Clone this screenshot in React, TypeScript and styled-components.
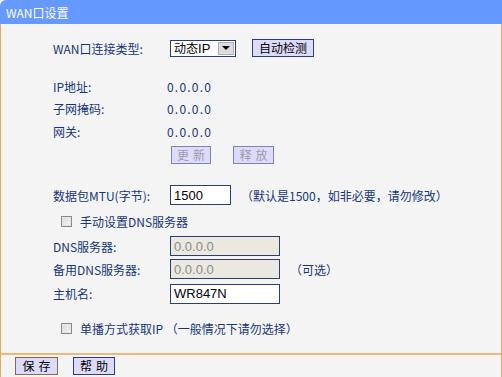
import React from 'react'
import styled, { createGlobalStyle } from 'styled-components'

const GlobalStyle = createGlobalStyle`
  html, body {
    margin: 0;
    padding: 0;
    background: #f4f4f4;
  }
  body {
    font-family: "Noto Sans CJK SC", "DejaVu Sans", sans-serif;
    font-size: 12px;
    color: #15367a;
  }
`

const Frame = styled.div`
  width: 502px;
  height: 377px;
  display: flex;
  flex-direction: column;
  background: #f4f4f4;
  overflow: hidden;
`

const Header = styled.div`
  height: 24px;
  flex: none;
  background: #6699ff;
  border-top-left-radius: 6px;
  display: flex;
  align-items: center;
  padding-left: 6px;
  color: #ffffff;
  font-size: 12px;
`

const Body = styled.div`
  flex: 1;
  display: flex;
  flex-direction: column;
  border-left: 1px solid #e9a862;
  border-right: 1px solid #e9a862;
  padding-top: 12px;
`

const Form = styled.div`
  display: flex;
  flex-direction: column;
  padding-left: 52px;
  height: 317px;
`

const Row = styled.div<{ $h: number; $indent?: number }>`
  height: ${(p) => p.$h}px;
  display: flex;
  align-items: center;
  padding-left: ${(p) => p.$indent || 0}px;
`

const Spacer = styled.div<{ $h: number }>`
  height: ${(p) => p.$h}px;
  flex: none;
`

const Label = styled.div`
  width: 117px;
  flex: none;
  white-space: nowrap;
`

const Value = styled.div`
  letter-spacing: 1.2px;
  margin-left: -3px;
`

const Note = styled.span<{ $ml: number }>`
  margin-left: ${(p) => p.$ml}px;
  white-space: nowrap;
`

const Select = styled.div`
  width: 66px;
  height: 17px;
  box-sizing: border-box;
  border: 1px solid #2a3f70;
  background: #ffffff;
  display: flex;
  align-items: center;
  justify-content: space-between;
  color: #000;
  padding-left: 3px;
`

const SelectText = styled.span`
  font-size: 12px;
  line-height: 1;
  & b {
    font-family: "Liberation Sans", sans-serif;
    font-weight: normal;
    font-size: 13px;
  }
`

const Arrow = styled.span`
  width: 16px;
  height: 13px;
  margin-right: 1px;
  background: #dcdcdc;
  border: 1px solid #b0b0b0;
  box-sizing: border-box;
  display: flex;
  align-items: center;
  justify-content: center;
  &::after {
    content: '';
    border-left: 4px solid transparent;
    border-right: 4px solid transparent;
    border-top: 4px solid #000;
  }
`

const Button = styled.button<{ $disabled?: boolean; $w: number; $ml?: number; $brown?: boolean }>`
  width: ${(p) => p.$w}px;
  height: 18px;
  margin-left: ${(p) => p.$ml || 0}px;
  padding: 0;
  box-sizing: border-box;
  font-family: "Noto Sans CJK SC", sans-serif;
  font-size: 12px;
  letter-spacing: ${(p) => (p.$w < 50 ? '4px' : '0')};
  text-indent: ${(p) => (p.$w < 50 ? '4px' : '0')};
  line-height: 1;
  background: #dcdcfa;
  color: ${(p) => (p.$disabled ? '#9a9ab0' : '#000000')};
  border: 1px solid ${(p) => (p.$brown ? '#8a6a40' : p.$disabled ? '#7a86b0' : '#2c3d80')};
  border-radius: 0;
`

const Input = styled.div<{ $w: number; $disabled?: boolean }>`
  width: ${(p) => p.$w}px;
  height: 20px;
  box-sizing: border-box;
  border: 1px solid #2a3f70;
  background: ${(p) => (p.$disabled ? '#ebe9df' : '#ffffff')};
  color: ${(p) => (p.$disabled ? '#8a8a8a' : '#000000')};
  font-family: "Liberation Sans", Arial, sans-serif;
  font-size: 13px;
  display: flex;
  align-items: center;
  padding-left: 3px;
`

const Check = styled.span`
  width: 11px;
  height: 11px;
  box-sizing: border-box;
  border: 1px solid #8a8a8a;
  background: linear-gradient(135deg, #d8d8d8, #f6f6f6);
  box-shadow: inset 0 0 0 1px #e4e4e4;
  margin-right: 8px;
  flex: none;
`

const Divider = styled.div`
  height: 2px;
  background: #eeb878;
  flex: none;
`

const Footer = styled.div`
  display: flex;
  align-items: center;
  padding-left: 14px;
  height: 22px;
`

export default function App() {
  return (
    <Frame>
      <GlobalStyle />
      <Header>WAN口设置</Header>
      <Body>
        <Form>
          <Row $h={24}>
            <Label>WAN口连接类型:</Label>
            <Select>
              <SelectText>
                动态<b>IP</b>
              </SelectText>
              <Arrow />
            </Select>
            <Button $w={62} $ml={16}>
              自动检测
            </Button>
          </Row>
          <Spacer $h={15} />
          <Row $h={22}>
            <Label>IP地址:</Label>
            <Value>0.0.0.0</Value>
          </Row>
          <Row $h={23}>
            <Label>子网掩码:</Label>
            <Value>0.0.0.0</Value>
          </Row>
          <Row $h={22}>
            <Label>网关:</Label>
            <Value>0.0.0.0</Value>
          </Row>
          <Row $h={25}>
            <Label />
            <Button $w={40} $ml={1} $disabled>
              更新
            </Button>
            <Button $w={41} $ml={22} $disabled>
              释放
            </Button>
          </Row>
          <Spacer $h={16} />
          <Row $h={24}>
            <Label>数据包MTU(字节):</Label>
            <Input $w={61}>1500</Input>
            <Note $ml={10}>（默认是1500，如非必要，请勿修改）</Note>
          </Row>
          <Row $h={28} $indent={8}>
            <Check />
            <span>手动设置DNS服务器</span>
          </Row>
          <Row $h={22}>
            <Label>DNS服务器:</Label>
            <Input $w={110} $disabled>
              0.0.0.0
            </Input>
          </Row>
          <Row $h={24}>
            <Label>备用DNS服务器:</Label>
            <Input $w={110} $disabled>
              0.0.0.0
            </Input>
            <Note $ml={10}>（可选）</Note>
          </Row>
          <Row $h={25}>
            <Label>主机名:</Label>
            <Input $w={110}>WR847N</Input>
          </Row>
          <Spacer $h={8} />
          <Row $h={28} $indent={8}>
            <Check />
            <span>单播方式获取IP （一般情况下请勿选择）</span>
          </Row>
        </Form>
        <Divider />
        <Footer>
          <Button $w={43} $brown>
            保存
          </Button>
          <Button $w={42} $ml={15}>
            帮助
          </Button>
        </Footer>
      </Body>
    </Frame>
  )
}
